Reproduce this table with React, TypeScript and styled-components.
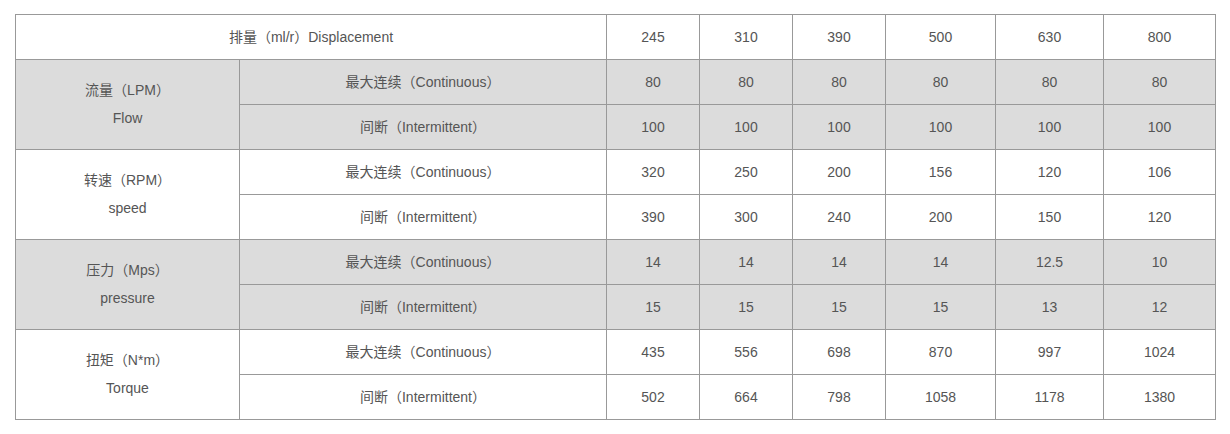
import React from "react";
import styled, { createGlobalStyle } from "styled-components";

const GlobalStyle = createGlobalStyle`
  html, body { margin: 0; padding: 0; background: #ffffff; }
  body { font-family: "Liberation Sans", Arial, "Noto Sans CJK SC", sans-serif; }
`;

const Page = styled.div`
  padding: 14px 0 0 15px;
`;

const Table = styled.table`
  width: 1200px;
  table-layout: fixed;
  border-collapse: collapse;
  font-size: 14px;
  color: #555555;
`;

const Row = styled.tr<{ $shade?: boolean }>`
  background: ${(p) => (p.$shade ? "#dcdcdc" : "#ffffff")};
`;

const Cell = styled.td`
  border: 1px solid #999999;
  height: 44px;
  padding: 0;
  text-align: center;
  vertical-align: middle;
  line-height: 20px;
`;

const GroupCell = styled(Cell)`
  line-height: 28px;
  padding-bottom: 2px;
`;

const widths = [224, 367, 93, 93, 93, 110, 108, 112];
const sizes = ["245", "310", "390", "500", "630", "800"];

type Group = {
  zh: string;
  en: string;
  cont: string[];
  inter: string[];
  shade: boolean;
};

const groups: Group[] = [
  { zh: "流量（LPM）", en: "Flow", cont: ["80", "80", "80", "80", "80", "80"], inter: ["100", "100", "100", "100", "100", "100"], shade: true },
  { zh: "转速（RPM）", en: "speed", cont: ["320", "250", "200", "156", "120", "106"], inter: ["390", "300", "240", "200", "150", "120"], shade: false },
  { zh: "压力（Mps）", en: "pressure", cont: ["14", "14", "14", "14", "12.5", "10"], inter: ["15", "15", "15", "15", "13", "12"], shade: true },
  { zh: "扭矩（N*m）", en: "Torque", cont: ["435", "556", "698", "870", "997", "1024"], inter: ["502", "664", "798", "1058", "1178", "1380"], shade: false },
];

export default function App() {
  return (
    <>
      <GlobalStyle />
      <Page>
        <Table>
          <colgroup>
            {widths.map((w, i) => (
              <col key={i} style={{ width: w }} />
            ))}
          </colgroup>
          <tbody>
            <Row>
              <Cell colSpan={2}>排量（ml/r）Displacement</Cell>
              {sizes.map((s) => (
                <Cell key={s}>{s}</Cell>
              ))}
            </Row>
            {groups.map((g) => (
              <React.Fragment key={g.en}>
                <Row $shade={g.shade}>
                  <GroupCell rowSpan={2}>
                    {g.zh}
                    <br />
                    {g.en}
                  </GroupCell>
                  <Cell>最大连续（Continuous）</Cell>
                  {g.cont.map((v, i) => (
                    <Cell key={i}>{v}</Cell>
                  ))}
                </Row>
                <Row $shade={g.shade}>
                  <Cell>间断（Intermittent）</Cell>
                  {g.inter.map((v, i) => (
                    <Cell key={i}>{v}</Cell>
                  ))}
                </Row>
              </React.Fragment>
            ))}
          </tbody>
        </Table>
      </Page>
    </>
  );
}
